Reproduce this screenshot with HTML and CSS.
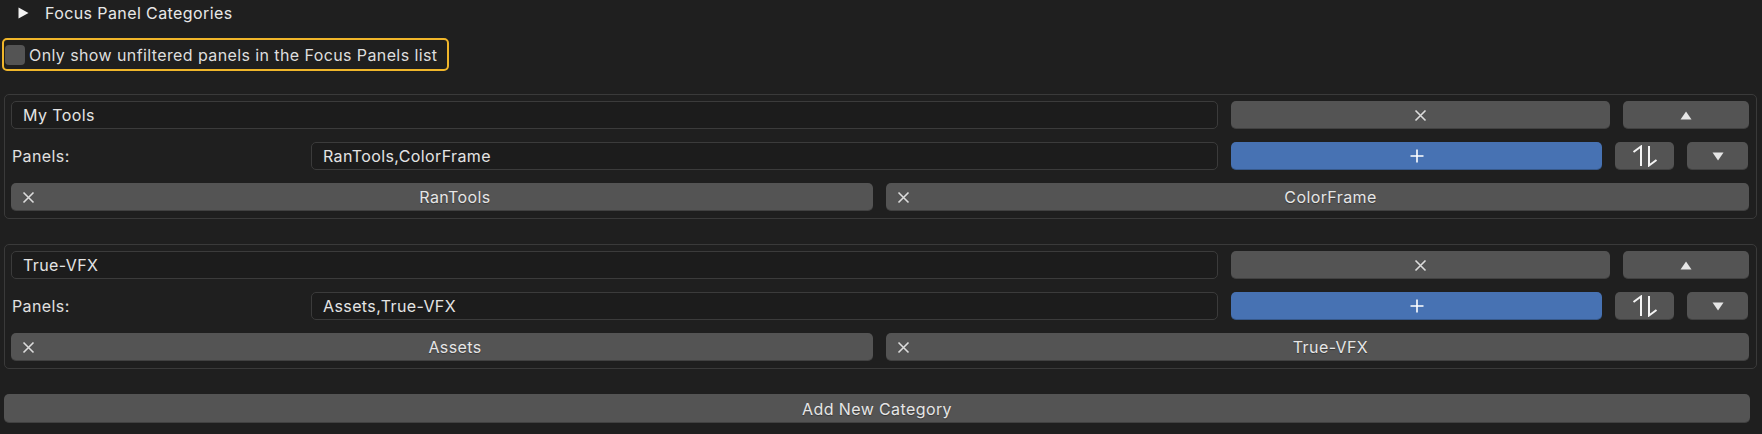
FILE: index.html
```html
<!DOCTYPE html>
<html lang="en">
<head>
<meta charset="utf-8">
<title>Focus Panel Categories</title>
<link rel="stylesheet" href="styles.css">
</head>
<body>
<div class="page">
  <div class="header">
    <svg class="disclosure" width="11" height="12" viewBox="0 0 11 12"><polygon points="0.5,0.5 10.5,6 0.5,11.5" fill="#f2f2f2"/></svg>
    <span class="header-title">Focus Panel Categories</span>
  </div>

  <div class="filter">
    <span class="checkbox"></span>
    <span class="filter-label">Only show unfiltered panels in the Focus Panels list</span>
  </div>

  <div class="category">
    <div class="row row-name">
      <div class="field">My Tools</div>
      <div class="btn"><svg width="13" height="13" viewBox="0 0 13 13"><path d="M1.5 1.5 L11.5 11.5 M11.5 1.5 L1.5 11.5" stroke="#dcdcdc" stroke-width="1.6" fill="none"/></svg></div>
      <div class="btn"><svg width="12" height="9" viewBox="0 0 12 9"><polygon points="6,0.5 11.5,8.5 0.5,8.5" fill="#e6e6e6"/></svg></div>
    </div>
    <div class="row row-panels">
      <div class="label">Panels:</div>
      <div class="field">RanTools,ColorFrame</div>
      <div class="btn btn-blue"><svg width="14" height="14" viewBox="0 0 14 14"><path d="M7 0.5 V13.5 M0.5 7 H13.5" stroke="#ffffff" stroke-width="1.6" fill="none"/></svg></div>
      <div class="btn"><svg width="26" height="22" viewBox="0 0 26 22"><path d="M1.5 7 L9 1.5 V21 M24.5 15 L17 20.5 V1" stroke="#f4f4f4" stroke-width="2" fill="none" stroke-linejoin="miter"/></svg></div>
      <div class="btn"><svg width="12" height="9" viewBox="0 0 12 9"><polygon points="0.5,0.5 11.5,0.5 6,8.5" fill="#e6e6e6"/></svg></div>
    </div>
    <div class="row row-tags">
      <div class="btn btn-tag"><span class="tag-icon"><svg width="13" height="13" viewBox="0 0 13 13"><path d="M1.5 1.5 L11.5 11.5 M11.5 1.5 L1.5 11.5" stroke="#dcdcdc" stroke-width="1.6" fill="none"/></svg></span><span class="tag-label">RanTools</span></div>
      <div class="btn btn-tag"><span class="tag-icon"><svg width="13" height="13" viewBox="0 0 13 13"><path d="M1.5 1.5 L11.5 11.5 M11.5 1.5 L1.5 11.5" stroke="#dcdcdc" stroke-width="1.6" fill="none"/></svg></span><span class="tag-label">ColorFrame</span></div>
    </div>
  </div>

  <div class="category">
    <div class="row row-name">
      <div class="field">True-VFX</div>
      <div class="btn"><svg width="13" height="13" viewBox="0 0 13 13"><path d="M1.5 1.5 L11.5 11.5 M11.5 1.5 L1.5 11.5" stroke="#dcdcdc" stroke-width="1.6" fill="none"/></svg></div>
      <div class="btn"><svg width="12" height="9" viewBox="0 0 12 9"><polygon points="6,0.5 11.5,8.5 0.5,8.5" fill="#e6e6e6"/></svg></div>
    </div>
    <div class="row row-panels">
      <div class="label">Panels:</div>
      <div class="field">Assets,True-VFX</div>
      <div class="btn btn-blue"><svg width="14" height="14" viewBox="0 0 14 14"><path d="M7 0.5 V13.5 M0.5 7 H13.5" stroke="#ffffff" stroke-width="1.6" fill="none"/></svg></div>
      <div class="btn"><svg width="26" height="22" viewBox="0 0 26 22"><path d="M1.5 7 L9 1.5 V21 M24.5 15 L17 20.5 V1" stroke="#f4f4f4" stroke-width="2" fill="none" stroke-linejoin="miter"/></svg></div>
      <div class="btn"><svg width="12" height="9" viewBox="0 0 12 9"><polygon points="0.5,0.5 11.5,0.5 6,8.5" fill="#e6e6e6"/></svg></div>
    </div>
    <div class="row row-tags">
      <div class="btn btn-tag"><span class="tag-icon"><svg width="13" height="13" viewBox="0 0 13 13"><path d="M1.5 1.5 L11.5 11.5 M11.5 1.5 L1.5 11.5" stroke="#dcdcdc" stroke-width="1.6" fill="none"/></svg></span><span class="tag-label">Assets</span></div>
      <div class="btn btn-tag"><span class="tag-icon"><svg width="13" height="13" viewBox="0 0 13 13"><path d="M1.5 1.5 L11.5 11.5 M11.5 1.5 L1.5 11.5" stroke="#dcdcdc" stroke-width="1.6" fill="none"/></svg></span><span class="tag-label">True-VFX</span></div>
    </div>
  </div>

  <div class="btn btn-add">Add New Category</div>
</div>
</body>
</html>
```

FILE: styles.css
```css
html, body {
  margin: 0;
  padding: 0;
  background: #1f1f1f;
}

body {
  font-family: Inter, "Noto Sans", "DejaVu Sans", sans-serif;
  font-size: 16px;
  letter-spacing: 0.4px;
  color: #e4e4e4;
}

.page {
  padding: 1px 5px 0 4px;
}

.header {
  height: 24px;
  display: flex;
  align-items: center;
  padding-left: 14px;
}

.disclosure {
  display: block;
  margin-right: 16px;
}

.header-title {
  color: #e8e8e8;
}

.filter {
  margin-top: 13px;
  margin-left: -2px;
  width: 447px;
  height: 33px;
  box-sizing: border-box;
  border: 2px solid #f0b62a;
  border-radius: 5px;
  display: flex;
  align-items: center;
  padding-left: 1px;
}

.checkbox {
  width: 20px;
  height: 20px;
  border-radius: 4px;
  background: #545454;
  margin-right: 4px;
  flex: none;
}

.filter-label {
  color: #dedede;
}

.category {
  margin-top: 23px;
  border: 1px solid #3a3a3a;
  border-radius: 5px;
  padding: 6px 6px 7px;
  display: flex;
  flex-direction: column;
  gap: 13px;
}

.category + .category {
  margin-top: 25px;
}

.row {
  display: grid;
  height: 28px;
}

.row-name {
  grid-template-columns: 1207px 379px 126px;
  column-gap: 13px;
}

.row-panels {
  grid-template-columns: 287px 907px 370px 60px 61px;
  column-gap: 13px;
}

.row-panels .btn-blue {
  margin-right: -1px;
}

.row-panels .btn-blue + .btn {
  margin-left: 1px;
}

.row-tags {
  grid-template-columns: 862px 863px;
  column-gap: 13px;
}

.field {
  background: #1c1c1c;
  border: 1px solid #3b3b3b;
  border-radius: 5px;
  box-sizing: border-box;
  display: flex;
  align-items: center;
  padding-left: 11px;
  color: #e4e4e4;
}

.label {
  display: flex;
  align-items: center;
  padding-left: 1px;
  color: #e0e0e0;
}

.btn {
  background: #545454;
  border-radius: 5px;
  box-shadow: inset 0 -1px 0 rgba(0, 0, 0, 0.22);
  display: flex;
  align-items: center;
  justify-content: center;
  color: #e6e6e6;
  text-shadow: 0 1px 1px rgba(0, 0, 0, 0.35);
}

.btn svg {
  display: block;
}

.btn-blue {
  background: #4772b3;
}

.btn-tag {
  justify-content: flex-start;
}

.tag-icon {
  width: 26px;
  padding-left: 11px;
  box-sizing: border-box;
  flex: none;
  display: flex;
  align-items: center;
}

.tag-label {
  flex: 1;
  text-align: center;
}

.btn-add {
  margin-top: 25px;
  width: 1746px;
  height: 29px;
}
```
